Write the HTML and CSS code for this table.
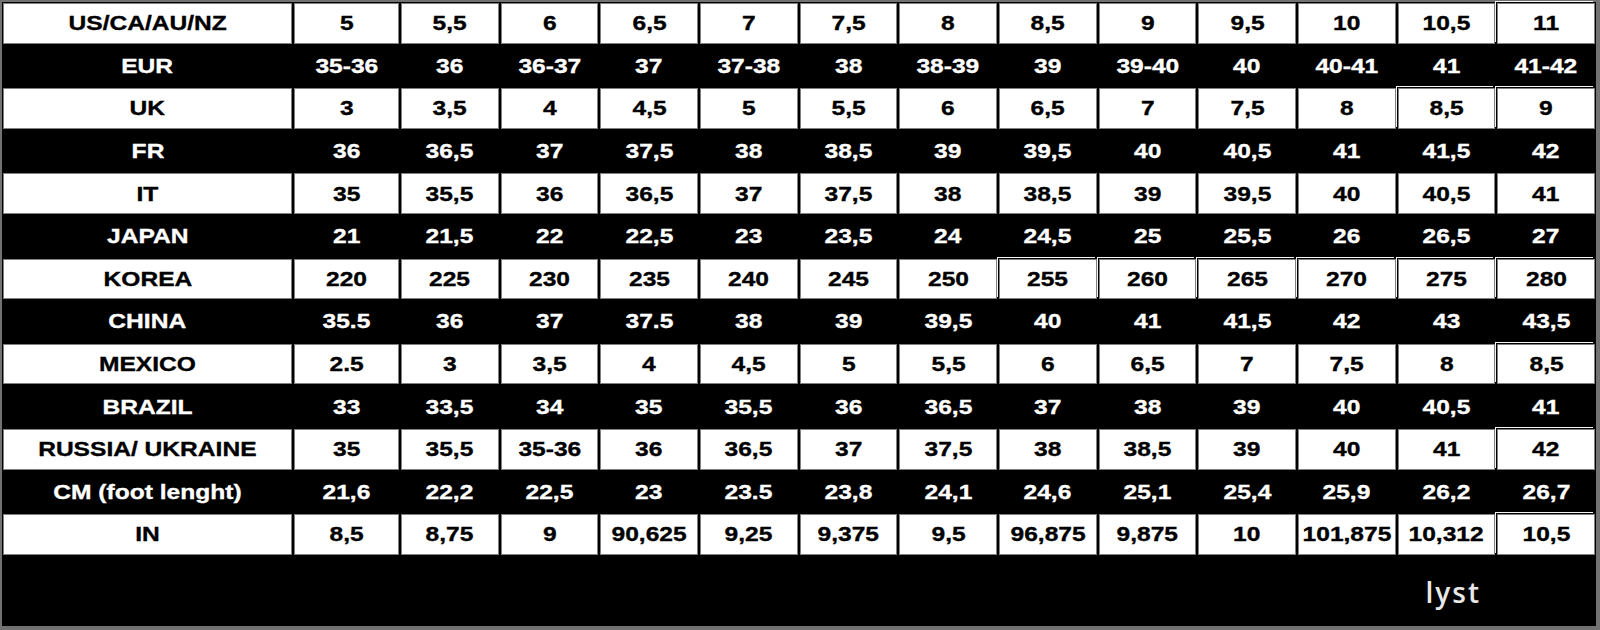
FILE: index.html
```html
<!DOCTYPE html>
<html>
<head>
<meta charset="utf-8">
<link rel="stylesheet" href="styles.css">
</head>
<body>
<div class="frame">
  <div class="chart">
    <div class="row light">
      <div class="cell"><span class="t">US/CA/AU/NZ</span></div>
      <div class="cell"><span class="t">5</span></div><div class="cell"><span class="t">5,5</span></div><div class="cell"><span class="t">6</span></div><div class="cell"><span class="t">6,5</span></div><div class="cell"><span class="t">7</span></div><div class="cell"><span class="t">7,5</span></div><div class="cell"><span class="t">8</span></div><div class="cell"><span class="t">8,5</span></div><div class="cell"><span class="t">9</span></div><div class="cell"><span class="t">9,5</span></div><div class="cell"><span class="t">10</span></div><div class="cell"><span class="t">10,5</span></div><div class="cell hl"><span class="t">11</span></div>
    </div>
    <div class="row dark">
      <div class="cell"><span class="t">EUR</span></div>
      <div class="cell"><span class="t">35-36</span></div><div class="cell"><span class="t">36</span></div><div class="cell"><span class="t">36-37</span></div><div class="cell"><span class="t">37</span></div><div class="cell"><span class="t">37-38</span></div><div class="cell"><span class="t">38</span></div><div class="cell"><span class="t">38-39</span></div><div class="cell"><span class="t">39</span></div><div class="cell"><span class="t">39-40</span></div><div class="cell"><span class="t">40</span></div><div class="cell"><span class="t">40-41</span></div><div class="cell"><span class="t">41</span></div><div class="cell"><span class="t">41-42</span></div>
    </div>
    <div class="row light">
      <div class="cell"><span class="t">UK</span></div>
      <div class="cell"><span class="t">3</span></div><div class="cell"><span class="t">3,5</span></div><div class="cell"><span class="t">4</span></div><div class="cell"><span class="t">4,5</span></div><div class="cell"><span class="t">5</span></div><div class="cell"><span class="t">5,5</span></div><div class="cell"><span class="t">6</span></div><div class="cell"><span class="t">6,5</span></div><div class="cell"><span class="t">7</span></div><div class="cell"><span class="t">7,5</span></div><div class="cell"><span class="t">8</span></div><div class="cell hl"><span class="t">8,5</span></div><div class="cell hl"><span class="t">9</span></div>
    </div>
    <div class="row dark">
      <div class="cell"><span class="t">FR</span></div>
      <div class="cell"><span class="t">36</span></div><div class="cell"><span class="t">36,5</span></div><div class="cell"><span class="t">37</span></div><div class="cell"><span class="t">37,5</span></div><div class="cell"><span class="t">38</span></div><div class="cell"><span class="t">38,5</span></div><div class="cell"><span class="t">39</span></div><div class="cell"><span class="t">39,5</span></div><div class="cell"><span class="t">40</span></div><div class="cell"><span class="t">40,5</span></div><div class="cell"><span class="t">41</span></div><div class="cell"><span class="t">41,5</span></div><div class="cell"><span class="t">42</span></div>
    </div>
    <div class="row light">
      <div class="cell"><span class="t">IT</span></div>
      <div class="cell"><span class="t">35</span></div><div class="cell"><span class="t">35,5</span></div><div class="cell"><span class="t">36</span></div><div class="cell"><span class="t">36,5</span></div><div class="cell"><span class="t">37</span></div><div class="cell"><span class="t">37,5</span></div><div class="cell"><span class="t">38</span></div><div class="cell"><span class="t">38,5</span></div><div class="cell"><span class="t">39</span></div><div class="cell"><span class="t">39,5</span></div><div class="cell"><span class="t">40</span></div><div class="cell"><span class="t">40,5</span></div><div class="cell"><span class="t">41</span></div>
    </div>
    <div class="row dark">
      <div class="cell"><span class="t">JAPAN</span></div>
      <div class="cell"><span class="t">21</span></div><div class="cell"><span class="t">21,5</span></div><div class="cell"><span class="t">22</span></div><div class="cell"><span class="t">22,5</span></div><div class="cell"><span class="t">23</span></div><div class="cell"><span class="t">23,5</span></div><div class="cell"><span class="t">24</span></div><div class="cell"><span class="t">24,5</span></div><div class="cell"><span class="t">25</span></div><div class="cell"><span class="t">25,5</span></div><div class="cell"><span class="t">26</span></div><div class="cell"><span class="t">26,5</span></div><div class="cell"><span class="t">27</span></div>
    </div>
    <div class="row light">
      <div class="cell"><span class="t">KOREA</span></div>
      <div class="cell"><span class="t">220</span></div><div class="cell"><span class="t">225</span></div><div class="cell"><span class="t">230</span></div><div class="cell"><span class="t">235</span></div><div class="cell"><span class="t">240</span></div><div class="cell"><span class="t">245</span></div><div class="cell"><span class="t">250</span></div><div class="cell hl"><span class="t">255</span></div><div class="cell hl"><span class="t">260</span></div><div class="cell hl"><span class="t">265</span></div><div class="cell hl"><span class="t">270</span></div><div class="cell hl"><span class="t">275</span></div><div class="cell hl"><span class="t">280</span></div>
    </div>
    <div class="row dark">
      <div class="cell"><span class="t">CHINA</span></div>
      <div class="cell"><span class="t">35.5</span></div><div class="cell"><span class="t">36</span></div><div class="cell"><span class="t">37</span></div><div class="cell"><span class="t">37.5</span></div><div class="cell"><span class="t">38</span></div><div class="cell"><span class="t">39</span></div><div class="cell"><span class="t">39,5</span></div><div class="cell"><span class="t">40</span></div><div class="cell"><span class="t">41</span></div><div class="cell"><span class="t">41,5</span></div><div class="cell"><span class="t">42</span></div><div class="cell"><span class="t">43</span></div><div class="cell"><span class="t">43,5</span></div>
    </div>
    <div class="row light">
      <div class="cell"><span class="t">MEXICO</span></div>
      <div class="cell"><span class="t">2.5</span></div><div class="cell"><span class="t">3</span></div><div class="cell"><span class="t">3,5</span></div><div class="cell"><span class="t">4</span></div><div class="cell"><span class="t">4,5</span></div><div class="cell"><span class="t">5</span></div><div class="cell"><span class="t">5,5</span></div><div class="cell"><span class="t">6</span></div><div class="cell"><span class="t">6,5</span></div><div class="cell"><span class="t">7</span></div><div class="cell"><span class="t">7,5</span></div><div class="cell"><span class="t">8</span></div><div class="cell hl"><span class="t">8,5</span></div>
    </div>
    <div class="row dark">
      <div class="cell"><span class="t">BRAZIL</span></div>
      <div class="cell"><span class="t">33</span></div><div class="cell"><span class="t">33,5</span></div><div class="cell"><span class="t">34</span></div><div class="cell"><span class="t">35</span></div><div class="cell"><span class="t">35,5</span></div><div class="cell"><span class="t">36</span></div><div class="cell"><span class="t">36,5</span></div><div class="cell"><span class="t">37</span></div><div class="cell"><span class="t">38</span></div><div class="cell"><span class="t">39</span></div><div class="cell"><span class="t">40</span></div><div class="cell"><span class="t">40,5</span></div><div class="cell"><span class="t">41</span></div>
    </div>
    <div class="row light">
      <div class="cell"><span class="t">RUSSIA/ UKRAINE</span></div>
      <div class="cell"><span class="t">35</span></div><div class="cell"><span class="t">35,5</span></div><div class="cell"><span class="t">35-36</span></div><div class="cell"><span class="t">36</span></div><div class="cell"><span class="t">36,5</span></div><div class="cell"><span class="t">37</span></div><div class="cell"><span class="t">37,5</span></div><div class="cell"><span class="t">38</span></div><div class="cell"><span class="t">38,5</span></div><div class="cell"><span class="t">39</span></div><div class="cell"><span class="t">40</span></div><div class="cell"><span class="t">41</span></div><div class="cell hl"><span class="t">42</span></div>
    </div>
    <div class="row dark">
      <div class="cell"><span class="t">CM (foot lenght)</span></div>
      <div class="cell"><span class="t">21,6</span></div><div class="cell"><span class="t">22,2</span></div><div class="cell"><span class="t">22,5</span></div><div class="cell"><span class="t">23</span></div><div class="cell"><span class="t">23.5</span></div><div class="cell"><span class="t">23,8</span></div><div class="cell"><span class="t">24,1</span></div><div class="cell"><span class="t">24,6</span></div><div class="cell"><span class="t">25,1</span></div><div class="cell"><span class="t">25,4</span></div><div class="cell"><span class="t">25,9</span></div><div class="cell"><span class="t">26,2</span></div><div class="cell"><span class="t">26,7</span></div>
    </div>
    <div class="row light">
      <div class="cell"><span class="t">IN</span></div>
      <div class="cell"><span class="t">8,5</span></div><div class="cell"><span class="t">8,75</span></div><div class="cell"><span class="t">9</span></div><div class="cell"><span class="t">90,625</span></div><div class="cell"><span class="t">9,25</span></div><div class="cell"><span class="t">9,375</span></div><div class="cell"><span class="t">9,5</span></div><div class="cell"><span class="t">96,875</span></div><div class="cell"><span class="t">9,875</span></div><div class="cell"><span class="t">10</span></div><div class="cell"><span class="t">101,875</span></div><div class="cell"><span class="t">10,312</span></div><div class="cell hl"><span class="t">10,5</span></div>
    </div>
  </div>
  <div class="footer"><span class="logo">lyst</span></div>
</div>
</body>
</html>
```
FILE: styles.css
```css
html, body {
  margin: 0;
  padding: 0;
  background: #000;
}

.frame {
  width: 1600px;
  height: 630px;
  box-sizing: border-box;
  border-style: solid;
  border-color: #727272;
  border-width: 2px 4px 4px 2px;
  background: #000;
  display: flex;
  flex-direction: column;
  padding: 1px 1px 0 1px;
}

.chart {
  display: flex;
  flex-direction: column;
  gap: 2px;
}

.row {
  display: grid;
  grid-template-columns: 289px 105px repeat(12, 1fr);
  column-gap: 2px;
  height: 40.6px;
}

.cell {
  display: flex;
  align-items: center;
  justify-content: center;
  box-sizing: border-box;
  font-family: "Liberation Sans", Arial, Helvetica, sans-serif;
  font-weight: bold;
  font-size: 21px;
  white-space: nowrap;
  min-width: 0;
}

.light .cell {
  background: #fff;
  color: #000;
  border: 1px solid #808080;
}

.dark .cell {
  background: #000;
  color: #fff;
}

.light .cell.hl {
  box-shadow: 0 0 0 1px #000, -2px -2px 0 0 #f4f4f4;
}

.t {
  display: inline-block;
  transform: scaleX(1.17);
  -webkit-text-stroke: 0.35px currentColor;
}

.footer {
  flex: 1;
  display: flex;
  justify-content: flex-end;
  align-items: flex-start;
  padding: 23px 114px 0 0;
}

.logo {
  font-family: "Open Sans", "DejaVu Sans", sans-serif;
  font-weight: 600;
  font-size: 28px;
  line-height: 1;
  letter-spacing: 2px;
  color: #e8e8e8;
}
```
